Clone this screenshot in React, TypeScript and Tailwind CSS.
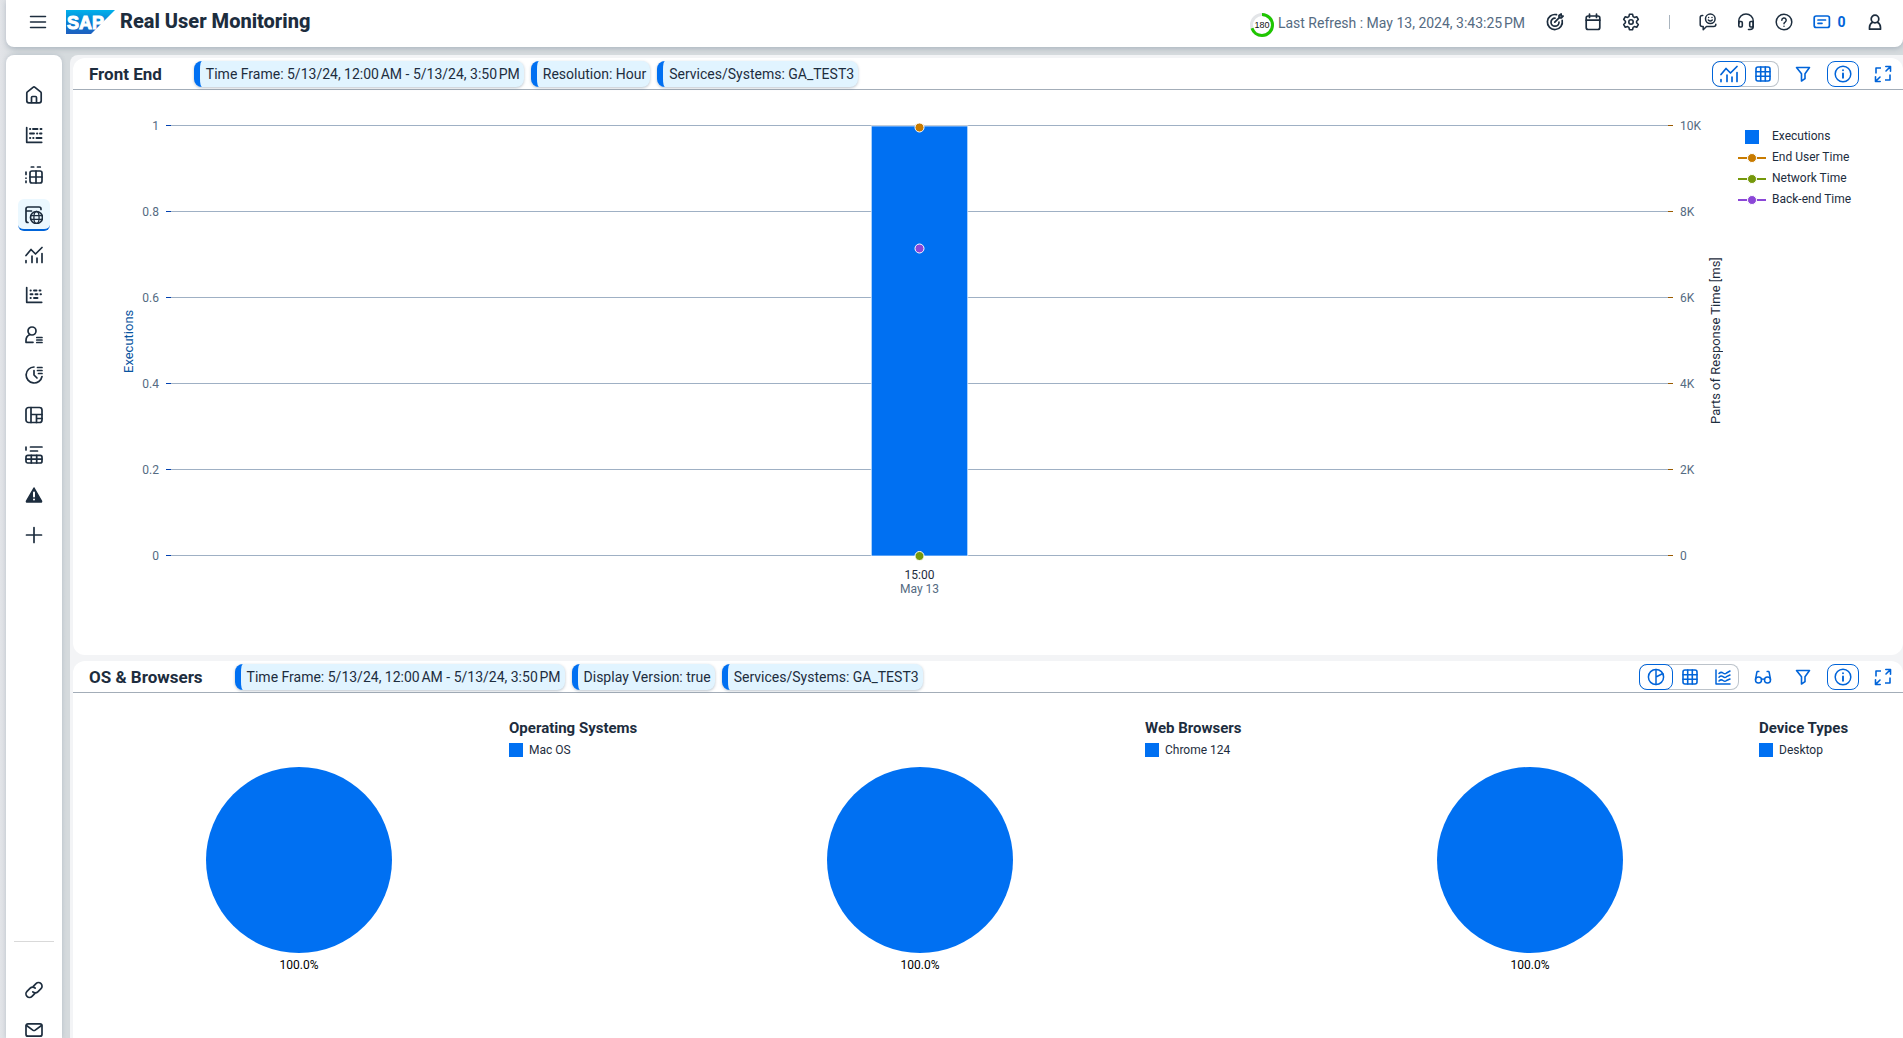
import type { ReactNode } from "react";

type IconProps = { children: ReactNode; w?: number };

function Icon({ children, w = 1.5 }: IconProps) {
  return (
    <svg
      width="18"
      height="18"
      viewBox="0 0 18 18"
      fill="none"
      stroke="currentColor"
      strokeWidth={w}
      strokeLinecap="round"
      strokeLinejoin="round"
      aria-hidden="true"
      className="shrink-0"
    >
      {children}
    </svg>
  );
}

const MenuIcon = () => (
  <Icon>
    <path d="M1.5 3.5h15M1.5 9h15M1.5 14.5h15" />
  </Icon>
);
const HomeIcon = () => (
  <Icon w={1.7}>
    <path d="M1.8 7.2v7.6q0 2 2 2h10.4q2 0 2-2V7.2q0-.8-.6-1.3L10 1.3q-1-.8-2 0L2.4 5.9q-.6.5-.6 1.3z" />
    <path d="M6.5 16.5v-5q0-1 1-1h3q1 0 1 1v5" />
  </Icon>
);
const GanttIcon = () => (
  <Icon w={1.7}>
    <path d="M1.7 1.5v14.8h15" />
    <path d="M5 3h.3M8 3h4.5M15.5 3h1M5 7.5h4M12 7.5h.3M15 7.5h1.5M5 12h.3M8.2 12h.3M11.5 12h5" strokeWidth="1.9" />
  </Icon>
);
const PivotIcon = () => (
  <Icon w={1.7}>
    <path d="M6.3 1h2.4M12.5 1h2.8M1 6v2.5M1 12v.2M1 15v1.4" />
    <rect x="5" y="5" width="12" height="12" rx="2" />
    <path d="M5 11h12M11 5v12" />
  </Icon>
);
const WebIcon = () => (
  <Icon w={1.7}>
    <path d="M3 16.5q-2 0-2-2V3q0-2 2-2h11q2 0 2 2v.5M1.5 5h5" />
    <circle cx="11.5" cy="11.5" r="6" />
    <ellipse cx="11.5" cy="11.5" rx="2.6" ry="6" strokeWidth="1.3" />
    <path d="M5.8 9.6h11.4M5.8 13.4h11.4" strokeWidth="1.3" />
  </Icon>
);
const TrendIcon = () => (
  <Icon w={1.7}>
    <path d="M1 9.5 6 3.5l4.5 4.5L17 1.5M1 14.6v2M7 10v6.5M12 12v4.5M17 7.5v9" />
  </Icon>
);
const ScatterIcon = () => (
  <Icon w={1.7}>
    <path d="M1.7 1.5v14.8h15" />
    <path d="M5.5 4.5h.3M9 4.5h2.5M14.5 4.5h1M5.5 8.2h2M10.5 8.2h2M15.5 8.2h.5M5.5 12h.3M9 12h3.5" strokeWidth="1.9" />
  </Icon>
);
const UserListIcon = () => (
  <Icon w={1.7}>
    <circle cx="7" cy="5" r="4" />
    <path d="M4.5 8.8Q1 10.5 1 14.5v1.8h7" />
    <path d="M11.8 11.5H17M11.8 14H17M11.8 16.5H17" />
  </Icon>
);
const HistoryIcon = () => (
  <Icon w={1.7}>
    <path d="M9 1a8 8 0 1 0 8 9.5" />
    <path d="M9 4.5V9l3 3M12.5 1.5H17M12.5 4.5H17M13.5 7.5H17" />
  </Icon>
);
const DashboardIcon = () => (
  <Icon w={1.7}>
    <rect x="1" y="1.5" width="16" height="15" rx="2.5" />
    <path d="M6 1.5v15M6 8.5h11M11.5 8.5v8M11.5 12.5H17" />
  </Icon>
);
const TableReportIcon = () => (
  <Icon w={1.7}>
    <path d="M1 1v3M5.500 1H17M5.500 5h7" />
    <rect x="1" y="9.3" width="16" height="7.7" rx="1.8" />
    <path d="M1 13.1h16M6.3 9.3V17M11.7 9.3V17" />
  </Icon>
);
const AlertIcon = () => (
  <Icon>
    <path d="M9 2 16.5 15.2q.3.8-.6.8H2.1q-.9 0-.6-.8z" fill="currentColor" />
    <path d="M9 6.5v4M9 13.4v.1" stroke="#fff" strokeWidth="2" />
  </Icon>
);
const PlusIcon = () => (
  <Icon w={1.7}>
    <path d="M9 1.5v15M1.5 9h15" />
  </Icon>
);
const LinkIcon = () => (
  <Icon w={1.7}>
    <path d="M8.3 5.4 11 2.7a3.5 3.5 0 0 1 5 5l-3.2 3.2a3.5 3.5 0 0 1-5 0" />
    <path d="M9.7 12.6 7 15.3a3.5 3.5 0 0 1-5-5l3.2-3.2a3.5 3.5 0 0 1 5 0" />
  </Icon>
);
const MailIcon = () => (
  <Icon w={1.7}>
    <rect x="1" y="2.8" width="16" height="12.4" rx="2" />
    <path d="m1.5 4.5 6.3 4.6q1.2.8 2.4 0l6.3-4.6" />
  </Icon>
);
const TargetIcon = () => (
  <Icon w={1.7}>
    <path d="M10.5 1.7A7.5 7.5 0 1 0 16.2 7.4" />
    <path d="M9 5.2a4 4 0 1 0 4 4M8.8 9.2l5-5M13 4.8V2.5L15.2.9V3H17.2L15.4 5z" />
  </Icon>
);
const CalendarIcon = () => (
  <Icon w={1.7}>
    <rect x="2.2" y="3" width="13.6" height="13.5" rx="2" />
    <path d="M5.5 1v3.5M12.5 1v3.5M2.2 7.2h13.6" />
  </Icon>
);
const GearIcon = () => (
  <Icon w={1.6}>
    <path d="M7.4 1.3h3.2l.5 2.3 1.3.8 2.3-.7 1.6 2.8-1.7 1.7v1.6l1.7 1.7-1.6 2.8-2.3-.7-1.3.8-.5 2.3H7.4l-.5-2.3-1.3-.8-2.3.7-1.6-2.8 1.7-1.7V8.2L1.700 6.500l1.600-2.800 2.300.7 1.300-.8z" />
    <circle cx="9" cy="9" r="2.2" />
  </Icon>
);
const FeedbackIcon = () => (
  <Icon>
    <path d="M3.8 2.5h-.6q-2 0-2 2v7q0 2 2 2h1v3.3l3.3-3.3h7.3q2 0 2-2v-.2" />
    <circle cx="11.3" cy="5.800" r="4.800" />
    <path d="M9.6 4.5v.1M13 4.5v.1M9.3 7q2 2 4 0" />
  </Icon>
);
const HeadsetIcon = () => (
  <Icon w={1.6}>
    <path d="M1.8 10.5V8a7.2 7 0 0 1 14.4 0v5.5q0 3-3.2 3h-1.5" />
    <rect x="1.8" y="8.500" width="3.5" height="5.5" rx="1.2" />
    <rect x="12.7" y="8.500" width="3.5" height="5.5" rx="1.2" />
  </Icon>
);
const HelpIcon = () => (
  <Icon>
    <circle cx="9" cy="9" r="7.8" />
    <path d="M6.8 7.2a2.2 2.2 0 1 1 3.3 1.900Q9 9.700 9 10.700M9 13.200v.1" />
  </Icon>
);
const MessageIcon = () => (
  <Icon w={1.7}>
    <rect x="1.2" y="3" width="15.2" height="11.5" rx="2" />
    <path d="M5 7h7.5M5 10.3h4" />
  </Icon>
);
const PersonIcon = () => (
  <Icon w={1.7}>
    <circle cx="9" cy="6" r="3.8" />
    <path d="M6.6 9.3Q3.5 11 3.5 14.5v1.7h11v-1.7Q14.5 11 11.4 9.3" />
  </Icon>
);
const GridIcon = () => (
  <Icon w={1.6}>
    <rect x="2" y="2" width="14" height="14" rx="2" />
    <path d="M2 6.7h14M2 11.3h14M6.7 2v14M11.3 2v14" />
  </Icon>
);
const FilterIcon = () => (
  <Icon w={1.6}>
    <path d="M2.5 2.5h13L11 8.7v5L7.5 16V8.7z" />
  </Icon>
);
const InfoIcon = () => (
  <Icon>
    <circle cx="9" cy="9" r="7.8" />
    <path d="M9 8.500v4.200M9 5.200v.1" strokeWidth="1.9" />
  </Icon>
);
const FullScreenIcon = () => (
  <Icon w={1.6}>
    <path d="M11.8 1.500h4.700v4.700M16.500 1.500l-4.500 4.500M6.200 16.500H1.500v-4.700M1.500 16.500 6 12" />
    <path d="M2 8.500V3h5M16 9.500V15h-5" strokeLinecap="butt" />
  </Icon>
);
const PieIcon = () => (
  <Icon>
    <circle cx="9" cy="9" r="7.6" />
    <path d="M9 1.400v15.200M9 9l6.800-3.500" />
  </Icon>
);
const WavesIcon = () => (
  <Icon>
    <path d="M2 2v14h14M5 5.500q2-2 4-.5t3.500 0L16 3M5 9.200q2-2 4-.5t3.500 0L16 7M5 13q2-2 4-.5t3.500 0l3.500-1.500" />
  </Icon>
);
const GlassesIcon = () => (
  <Icon>
    <circle cx="4.500" cy="12" r="3" />
    <circle cx="13.500" cy="12" r="3" />
    <path d="M7.500 11.500q1.500-1.200 3 0M1.500 11.500 2.800 4.500q.3-1.500 2-1M16.500 11.500 15.200 4.500q-.3-1.500-2-1" />
  </Icon>
);

function SapLogo() {
  return (
    <svg width="49" height="24" viewBox="0 0 49 24" role="img" aria-label="SAP" className="shrink-0">
      <defs>
        <linearGradient id="sap-fill" x1="0" y1="0" x2="0" y2="1">
          <stop offset="0" stopColor="#00b1eb" />
          <stop offset="0.6" stopColor="#0b78cf" />
          <stop offset="1" stopColor="#1f5fbf" />
        </linearGradient>
      </defs>
      <path d="M0 0H49L25 24H0z" fill="url(#sap-fill)" />
      <text
        x="1"
        y="19"
        fill="#fff"
        stroke="#fff"
        strokeWidth="1"
        className="font-['Liberation_Sans',sans-serif] text-[18px] font-bold"
      >
        SAP
      </text>
    </svg>
  );
}

function RefreshGauge() {
  return (
    <svg width="24" height="24" viewBox="0 0 24 24" role="img" aria-label="180 seconds" className="mt-1.5 shrink-0">
      <circle cx="12" cy="12" r="10.5" fill="none" stroke="#e3e5e8" strokeWidth="3" />
      <circle
        cx="12"
        cy="12"
        r="10.5"
        fill="none"
        stroke="#1fc600"
        strokeWidth="3"
        pathLength="100"
        strokeDasharray="70 30"
        transform="rotate(-90 12 12)"
      />
      <text x="12" y="15" textAnchor="middle" fill="#111" className="font-['Liberation_Sans',sans-serif] text-[9px]">
        180
      </text>
    </svg>
  );
}

function HeaderButton({ label, children }: { label: string; children: ReactNode }) {
  return (
    <button aria-label={label} className="flex h-9 w-9 items-center justify-center">
      {children}
    </button>
  );
}

function Header() {
  return (
    <header className="ml-1.5 flex h-[47px] shrink-0 items-center rounded-b-lg bg-white pb-[3px] shadow-[0_2px_5px_rgba(85,107,130,0.3)]">
      <button aria-label="Menu" className="ml-3.5 flex h-9 w-9 items-center justify-center">
        <MenuIcon />
      </button>
      <a href="#home" className="ml-2.5">
        <SapLogo />
      </a>
      <h1 className="ml-[5px] pb-0.5 text-[20px] leading-6 font-extrabold">Real User Monitoring</h1>
      <div className="ml-auto flex items-center gap-1 text-[#556b82]">
        <RefreshGauge />
        <span className="pt-0.5 whitespace-nowrap">{"Last Refresh : May 13, 2024, 3:43:25\u202fPM"}</span>
      </div>
      <div className="ml-3 flex items-center gap-0.5 pr-2.5">
        <HeaderButton label="Goals"><TargetIcon /></HeaderButton>
        <HeaderButton label="Calendar"><CalendarIcon /></HeaderButton>
        <HeaderButton label="Settings"><GearIcon /></HeaderButton>
        <span className="mx-[18px] h-3.5 w-px bg-[#a9b4be]" />
        <HeaderButton label="Feedback"><FeedbackIcon /></HeaderButton>
        <HeaderButton label="Support"><HeadsetIcon /></HeaderButton>
        <HeaderButton label="Help"><HelpIcon /></HeaderButton>
        <button className="flex h-9 w-[51px] items-center justify-center gap-1.5 font-bold text-[#0064d9]">
          <MessageIcon />0
        </button>
        <HeaderButton label="Profile"><PersonIcon /></HeaderButton>
      </div>
    </header>
  );
}

const navItems = [
  { label: "Home", icon: <HomeIcon /> },
  { label: "Executions", icon: <GanttIcon /> },
  { label: "Requests", icon: <PivotIcon /> },
  { label: "Front End", icon: <WebIcon />, active: true },
  { label: "Trends", icon: <TrendIcon /> },
  { label: "Scatter", icon: <ScatterIcon /> },
  { label: "Users", icon: <UserListIcon /> },
  { label: "History", icon: <HistoryIcon /> },
  { label: "Dashboard", icon: <DashboardIcon /> },
  { label: "Reports", icon: <TableReportIcon /> },
  { label: "Alerts", icon: <AlertIcon /> },
  { label: "Add", icon: <PlusIcon /> },
];

function Sidebar() {
  return (
    <nav className="flex w-14 shrink-0 flex-col items-center rounded-t-lg bg-white pt-6 shadow-[0_0_4px_rgba(85,107,130,0.25)]">
      <ul className="flex flex-col gap-2">
        {navItems.map((item) => (
          <li key={item.label}>
            <a
              href="#nav"
              aria-label={item.label}
              className={
                item.active
                  ? "flex h-8 w-8 items-center justify-center rounded-md border-b-2 border-[#0064d9] bg-[#ebf8ff] pt-0.5"
                  : "flex h-8 w-8 items-center justify-center"
              }
            >
              {item.icon}
            </a>
          </li>
        ))}
      </ul>
      <div className="mt-auto -mb-2 flex shrink-0 flex-col items-center gap-2">
        <hr className="mb-6 w-10 border-[#d9d9d9]" />
        <a href="#links" aria-label="Links" className="flex h-8 w-8 items-center justify-center"><LinkIcon /></a>
        <a href="#mail" aria-label="Mail" className="flex h-8 w-8 items-center justify-center"><MailIcon /></a>
      </div>
    </nav>
  );
}

function Chip({ children }: { children: ReactNode }) {
  return (
    <span className="flex h-[26px] items-center rounded-lg border-l-[6px] border-[#0070f2] bg-[#e1f4ff] pr-1 pl-1.5 whitespace-nowrap shadow-[0_1px_3px_rgba(85,107,130,0.4)]">
      {children}
    </span>
  );
}

function ToolButton({ label, outlined, children }: { label: string; outlined?: boolean; children: ReactNode }) {
  return (
    <button
      aria-label={label}
      className={
        outlined
          ? "flex h-[26px] w-8 items-center justify-center rounded-lg border border-[#0064d9]"
          : "flex h-[26px] w-8 items-center justify-center"
      }
    >
      {children}
    </button>
  );
}

type View = { label: string; icon: ReactNode };

function ViewSwitch({ views }: { views: View[] }) {
  return (
    <div className="flex h-[26px] rounded-lg shadow-[inset_0_0_0_1px_#bcc3ca]">
      {views.map((view, i) => (
        <button
          key={view.label}
          aria-label={view.label}
          aria-pressed={i === 0}
          className={
            i === 0
              ? "flex w-[34px] items-center justify-center rounded-lg border border-[#0064d9] bg-white"
              : "flex w-[33px] items-center justify-center"
          }
        >
          {view.icon}
        </button>
      ))}
    </div>
  );
}

function PanelHeader({ title, chips, children }: { title: string; chips: string[]; children: ReactNode }) {
  return (
    <div className="flex h-8 items-center border-b border-[#a3adb8] pr-1 pl-4">
      <h2 className="text-[17px] leading-5 font-bold">{title}</h2>
      <div className="ml-8 flex gap-[7px]">
        {chips.map((chip) => (
          <Chip key={chip}>{chip}</Chip>
        ))}
      </div>
      <div className="ml-auto flex gap-2 text-[#0064d9]">{children}</div>
    </div>
  );
}

const leftTicks = ["1", "0.8", "0.6", "0.4", "0.2", "0"];
const rightTicks = ["10K", "8K", "6K", "4K", "2K", "0"];
const series = [
  { label: "End User Time", color: "#c87b00" },
  { label: "Network Time", color: "#75980b" },
  { label: "Back-end Time", color: "#8b47d7" },
];
const gridRows = [6, 92, 178, 264, 350, 436];

function AxisTitle({ children }: { children: ReactNode }) {
  return (
    <span className="rotate-180 text-center text-[13px] leading-4 whitespace-nowrap [writing-mode:vertical-rl]">
      {children}
    </span>
  );
}

function FrontEndChart() {
  return (
    <div className="flex h-[565px] items-start pt-[30px] text-xs">
      <div className="ml-12 flex h-[442px] w-4 shrink-0 justify-center text-[#0854a0]">
        <AxisTitle>Executions</AxisTitle>
      </div>
      <div className="flex h-[442px] w-[22px] shrink-0 flex-col justify-between text-right leading-3 text-[#556b82]">
        {leftTicks.map((tick) => (
          <span key={tick}>{tick}</span>
        ))}
      </div>
      <div className="mx-[7px] flex-1">
        <svg width="100%" height="442" className="block overflow-visible">
          {gridRows.map((y) => (
            <g key={y} shapeRendering="crispEdges">
              <line x1="0" x2="100%" y1={y - 0.5} y2={y - 0.5} stroke="#9fb0c4" />
              <line x1="0" x2="5" y1={y - 0.5} y2={y - 0.5} stroke="#0040b0" />
              <svg x="100%" overflow="visible">
                <line x1="-5" x2="0" y1={y - 0.5} y2={y - 0.5} stroke="#9a5b00" />
              </svg>
            </g>
          ))}
          <rect x="46.8%" y="6" width="6.4%" height="430" fill="#0070f2" stroke="#fff" strokeOpacity="0.7" />
          <circle cx="50%" cy="7.5" r="4.5" fill="#c87b00" stroke="#fff" />
          <circle cx="50%" cy="128.5" r="4.5" fill="#8b47d7" stroke="#fff" />
          <circle cx="50%" cy="436" r="4.5" fill="#75980b" stroke="#fff" />
        </svg>
        <p className="mt-1.5 text-center leading-[14px]">
          15:00
          <span className="block text-[#556b82]">May 13</span>
        </p>
      </div>
      <div className="flex h-[442px] w-7 shrink-0 flex-col justify-between leading-3 text-[#556b82]">
        {rightTicks.map((tick) => (
          <span key={tick}>{tick}</span>
        ))}
      </div>
      <div className="flex h-[442px] w-4 shrink-0 justify-center">
        <AxisTitle>Parts of Response Time [ms]</AxisTitle>
      </div>
      <ul className="mt-1.5 ml-3.5 w-[165px] shrink-0 leading-[21px]">
        <li className="flex items-center gap-1.5">
          <span className="flex w-7 justify-center">
            <span className="h-3.5 w-3.5 bg-[#0070f2]" />
          </span>
          Executions
        </li>
        {series.map((s) => (
          <li key={s.label} className="flex items-center gap-1.5">
            <svg width="28" height="10" viewBox="0 0 28 10" aria-hidden="true">
              <path d="M0 5H28" stroke={s.color} strokeWidth="2" />
              <circle cx="14" cy="5" r="4.5" fill={s.color} stroke="#fff" />
            </svg>
            {s.label}
          </li>
        ))}
      </ul>
    </div>
  );
}

type PieCardProps = { title: string; legend: string; figureClass: string; legendClass: string };

function PieCard({ title, legend, figureClass, legendClass }: PieCardProps) {
  return (
    <section className="flex flex-1 items-start pt-[25px] text-xs">
      <figure className={figureClass}>
        <svg width="186" height="186" viewBox="0 0 186 186" role="img" aria-label={`${legend} 100.0%`}>
          <circle cx="93" cy="93" r="93" fill="#0070f2" />
        </svg>
        <figcaption className="mt-1 leading-4 text-black">100.0%</figcaption>
      </figure>
      <div className={legendClass}>
        <h3 className="text-[15px] leading-5 font-bold">{title}</h3>
        <p className="mt-[3px] flex items-center gap-1.5 leading-[18px]">
          <span className="h-3.5 w-3.5 bg-[#0070f2]" />
          {legend}
        </p>
      </div>
    </section>
  );
}

export default function App() {
  const timeFrame = "Time Frame: 5/13/24, 12:00\u202fAM - 5/13/24, 3:50\u202fPM";
  return (
    <div className="flex h-screen flex-col overflow-hidden bg-linear-to-r from-[#e2e4e8] via-[#d5dadd] via-1% to-[#d5dadd] font-[Roboto,sans-serif] text-sm text-[#1d2d3e]">
      <Header />
      <div className="mt-2 flex min-h-0 flex-1 gap-2 pl-1.5">
        <Sidebar />
        <main className="flex min-w-0 flex-1 flex-col gap-1.5 rounded-tl-lg bg-[#f3f4f6] pt-[3px] pl-[3px]">
          <section className="shrink-0 rounded-xl bg-white">
            <PanelHeader title="Front End" chips={[timeFrame, "Resolution: Hour", "Services/Systems: GA_TEST3"]}>
              <ViewSwitch
                views={[
                  { label: "Chart", icon: <TrendIcon /> },
                  { label: "Table", icon: <GridIcon /> },
                ]}
              />
              <ToolButton label="Filter"><FilterIcon /></ToolButton>
              <ToolButton label="Information" outlined><InfoIcon /></ToolButton>
              <ToolButton label="Full screen"><FullScreenIcon /></ToolButton>
            </PanelHeader>
            <FrontEndChart />
          </section>
          <section className="flex-1 rounded-t-xl bg-white">
            <PanelHeader title="OS & Browsers" chips={[timeFrame, "Display Version: true", "Services/Systems: GA_TEST3"]}>
              <ViewSwitch
                views={[
                  { label: "Pie", icon: <PieIcon /> },
                  { label: "Table", icon: <GridIcon /> },
                  { label: "Time series", icon: <WavesIcon /> },
                ]}
              />
              <ToolButton label="Display options"><GlassesIcon /></ToolButton>
              <ToolButton label="Filter"><FilterIcon /></ToolButton>
              <ToolButton label="Information" outlined><InfoIcon /></ToolButton>
              <ToolButton label="Full screen"><FullScreenIcon /></ToolButton>
            </PanelHeader>
            <div className="flex">
              <PieCard
                title="Operating Systems"
                legend="Mac OS"
                figureClass="flex flex-1 flex-col items-center pt-[49px] pl-4"
                legendClass="w-[174px]"
              />
              <PieCard
                title="Web Browsers"
                legend="Chrome 124"
                figureClass="flex flex-1 flex-col items-center pt-[49px] pl-3"
                legendClass="w-[148px]"
              />
              <PieCard
                title="Device Types"
                legend="Desktop"
                figureClass="flex flex-1 flex-col items-center pt-[49px] pl-2"
                legendClass="w-[144px]"
              />
            </div>
          </section>
        </main>
      </div>
    </div>
  );
}
